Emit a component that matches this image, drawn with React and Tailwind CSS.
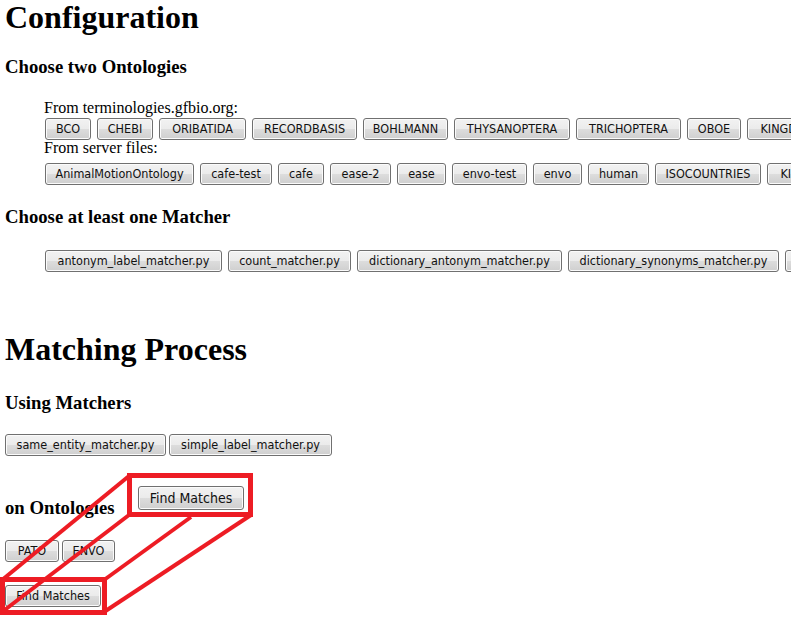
import React from 'react';

// Windows 7 style push button
function Btn({ label, w, big }) {
  return (
    <button
      className={`${w} ${big ? 'h-[24px] text-[14px]' : 'h-[22px] text-[12.5px]'} shrink-0 flex items-center justify-center rounded-[3px] border border-[#707070] bg-[linear-gradient(to_bottom,#f2f2f2_0%,#ebebeb_50%,#dddddd_50%,#cfcfcf_100%)] shadow-[inset_0_0_0_1px_#fbfbfb] text-[#111] font-['DejaVu_Sans_Condensed',sans-serif] leading-none whitespace-nowrap`}
    >
      {label}
    </button>
  );
}

const gfbio = [
  { label: 'BCO', w: 'w-[46px]' },
  { label: 'CHEBI', w: 'w-[56px]' },
  { label: 'ORIBATIDA', w: 'w-[87px]' },
  { label: 'RECORDBASIS', w: 'w-[105px]' },
  { label: 'BOHLMANN', w: 'w-[85px]' },
  { label: 'THYSANOPTERA', w: 'w-[116px]' },
  { label: 'TRICHOPTERA', w: 'w-[105px]' },
  { label: 'OBOE', w: 'w-[54px]' },
  { label: 'KINGDOM', w: 'w-[82px]' },
];

const serverFiles = [
  { label: 'AnimalMotionOntology', w: 'w-[149px]' },
  { label: 'cafe-test', w: 'w-[72px]' },
  { label: 'cafe', w: 'w-[46px]' },
  { label: 'ease-2', w: 'w-[61px]' },
  { label: 'ease', w: 'w-[49px]' },
  { label: 'envo-test', w: 'w-[75px]' },
  { label: 'envo', w: 'w-[49px]' },
  { label: 'human', w: 'w-[61px]' },
  { label: 'ISOCOUNTRIES', w: 'w-[106px]' },
  { label: 'KINGDOM', w: 'w-[82px]' },
];

const matchers = [
  { label: 'antonym_label_matcher.py', w: 'w-[177px]' },
  { label: 'count_matcher.py', w: 'w-[123px]' },
  { label: 'dictionary_antonym_matcher.py', w: 'w-[205px]' },
  { label: 'dictionary_synonyms_matcher.py', w: 'w-[211px]' },
  { label: 'same_entity_matcher.py', w: 'w-[161px]' },
];

export default function App() {
  return (
    <div className="relative w-[791px] h-[623px] overflow-hidden bg-white text-black font-['Liberation_Serif',serif]">
      <div className="flex flex-col pl-[5px]">
        {/* Configuration */}
        <h1 className="text-[32px] leading-[34px] h-[34px] font-bold">Configuration</h1>
        <h3 className="mt-[22px] text-[18.72px] leading-[22px] h-[22px] font-bold">Choose two Ontologies</h3>

        <div className="ml-[39px] mt-[21px] flex flex-col">
          <div className="text-[16px] leading-[18px] h-[18px]">From terminologies.gfbio.org:</div>
          <div className="ml-[1px] mt-[1px] flex gap-[6px]">
            {gfbio.map((o) => (
              <Btn key={o.label} {...o} />
            ))}
          </div>
          <div className="text-[16px] leading-[16px] h-[16px]">From server files:</div>
          <div className="ml-[1px] mt-[7px] flex gap-[6px]">
            {serverFiles.map((o) => (
              <Btn key={o.label} {...o} />
            ))}
          </div>
        </div>

        <h3 className="mt-[21px] text-[18.72px] leading-[22px] h-[22px] font-bold">Choose at least one Matcher</h3>
        <div className="ml-[40px] mt-[22px] flex gap-[6px]">
          {matchers.map((o) => (
            <Btn key={o.label} {...o} />
          ))}
        </div>

        {/* Matching Process */}
        <h1 className="mt-[61px] text-[32px] leading-[32px] h-[32px] font-bold">Matching Process</h1>
        <h3 className="mt-[27px] text-[18.72px] leading-[22px] h-[22px] font-bold">Using Matchers</h3>
        <div className="mt-[20px] flex gap-[3px]">
          <Btn label="same_entity_matcher.py" w="w-[161px]" />
          <Btn label="simple_label_matcher.py" w="w-[163px]" />
        </div>

        <div className="mt-[30px] flex items-start">
          <h3 className="w-[133px] mt-[11px] text-[18.72px] leading-[22px] h-[22px] font-bold">on Ontologies</h3>
          <Btn label="Find Matches" w="w-[106px]" big />
        </div>

        <div className="mt-[21px] flex gap-[3px]">
          <Btn label="PATO" w="w-[54px]" />
          <Btn label="ENVO" w="w-[53px]" />
        </div>

        <div className="mt-[23px] flex">
          <Btn label="Find Matches" w="w-[96px]" />
        </div>
      </div>

      {/* red annotation drawn over the page */}
      <svg className="absolute inset-0 pointer-events-none" width="791" height="623" viewBox="0 0 791 623">
        <g stroke="#ed1c24" fill="none">
          <rect x="129.5" y="475.5" width="121" height="39" strokeWidth="5" />
          <rect x="2.5" y="579.5" width="102" height="33" strokeWidth="5" />
          <line x1="129" y1="476" x2="2" y2="580" strokeWidth="4" />
          <line x1="129" y1="515" x2="2" y2="612" strokeWidth="4" />
          <line x1="251" y1="515" x2="104" y2="612" strokeWidth="4" />
          <line x1="191" y1="517" x2="104" y2="580" strokeWidth="4" />
        </g>
      </svg>
    </div>
  );
}
